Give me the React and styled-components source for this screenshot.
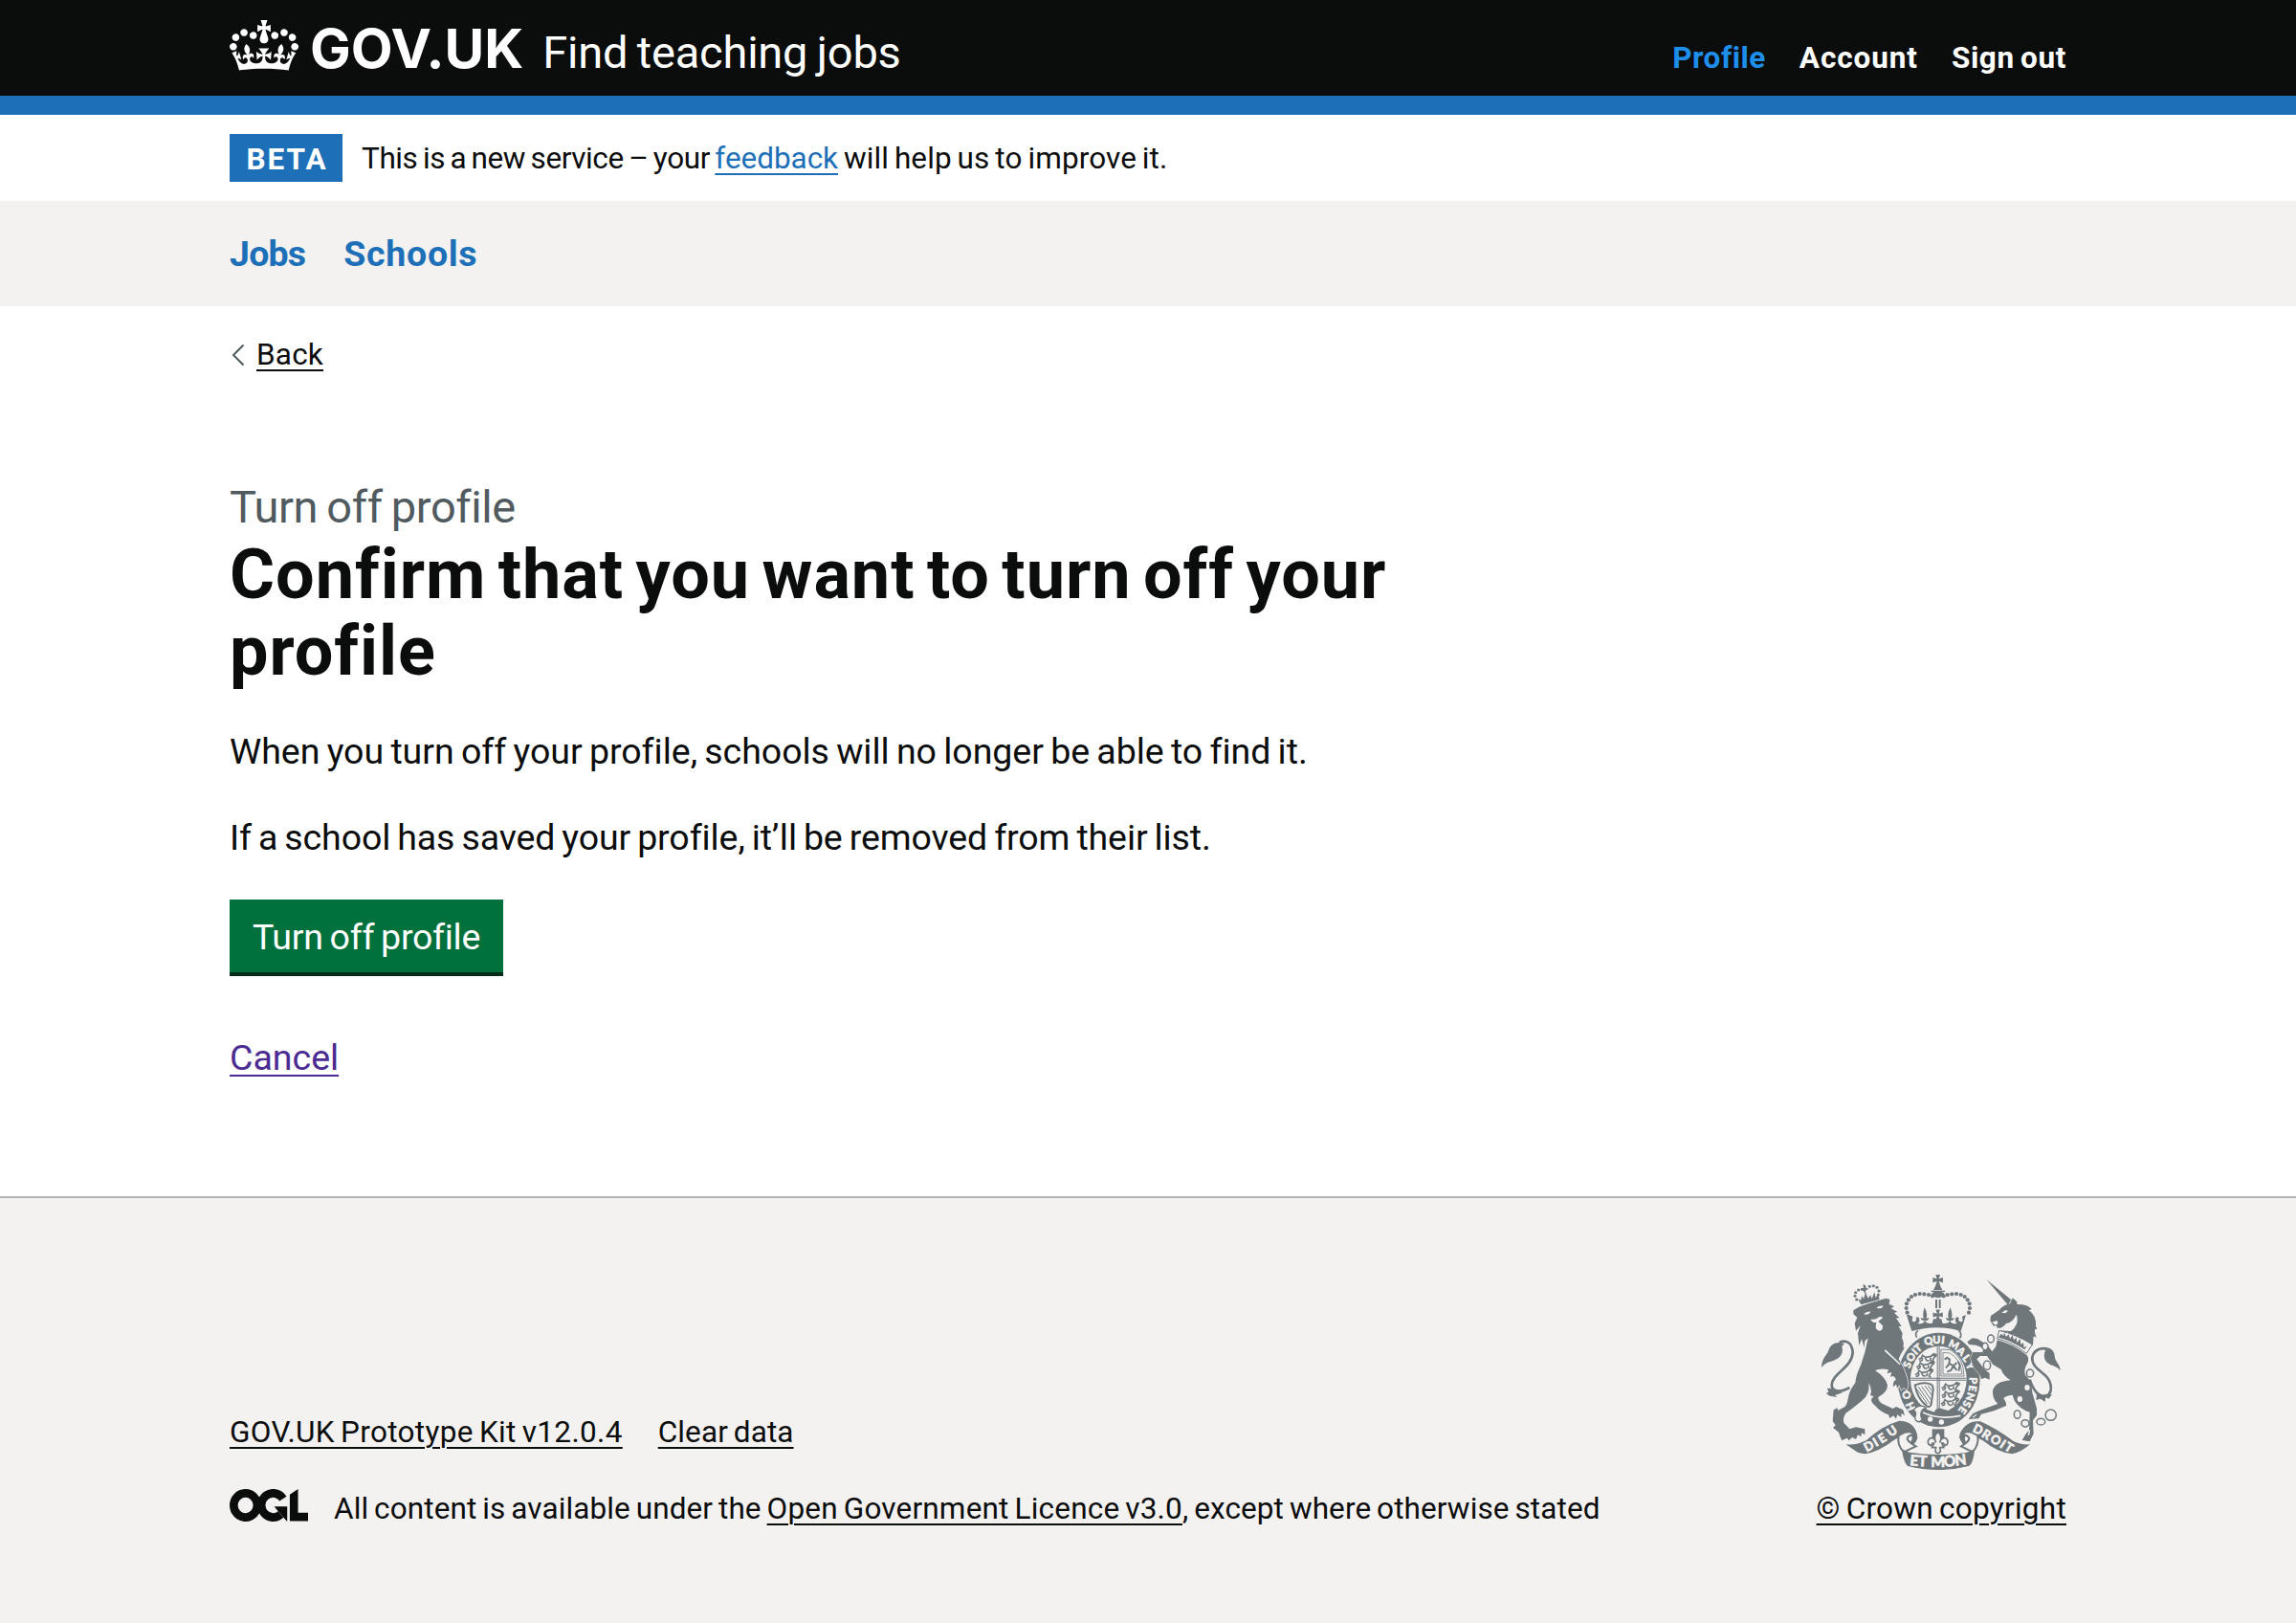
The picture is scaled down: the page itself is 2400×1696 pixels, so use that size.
import React from "react";
import styled, { createGlobalStyle, css } from "styled-components";

const ink = "#0b0c0c";
const blue = "#1d70b8";
const pale = "#f3f2f1";
const crestGrey = "#6f777b";

const GlobalStyle = createGlobalStyle`
  *, *::before, *::after { box-sizing: border-box; }
  body {
    margin: 0;
    background: #ffffff;
    color: ${ink};
    font-family: Roboto, "Liberation Sans", sans-serif;
    font-size: 31.5px;
    line-height: 40px;
    word-spacing: -2px;
  }
  h1, p, ul { margin: 0; padding: 0; font-weight: inherit; }
  ul { list-style: none; }
`;

const Container = styled.div`
  width: 1920px;
  margin: 0 auto;
`;

const underline = css`
  text-decoration: underline;
  text-decoration-thickness: 2px;
  text-underline-offset: 4.6px;
`;

const Link = styled.a`
  ${underline}
  color: ${(p) => p.$color || ink};
  letter-spacing: ${(p) => p.$track || 0}px;
  white-space: nowrap;
`;

/* Header */
const Header = styled.header`
  height: 120px;
  background: ${ink};
  border-bottom: 20px solid ${blue};
  color: #ffffff;
`;

const HeaderInner = styled(Container)`
  display: flex;
  justify-content: space-between;
  align-items: flex-start;
  padding-top: 21px;
`;

const Brand = styled.div`
  display: flex;
  align-items: flex-start;
`;

const CrownIcon = styled.svg`
  display: block;
  width: 72px;
  height: 53px;
  margin-right: 12px;
`;

const BrandText = styled.div`
  display: flex;
  align-items: baseline;
  line-height: 60px;
`;

const LogoType = styled.span`
  font-family: Inter, sans-serif;
  font-weight: 700;
  font-size: 57px;
`;

const ServiceName = styled.span`
  margin-left: 20px;
  font-size: 47px;
  letter-spacing: -0.2px;
`;

const AccountNav = styled.nav`
  display: flex;
  gap: 35px;
  margin-top: 20px;
`;

const AccountLink = styled.a`
  color: ${(p) => (p.$active ? "#1d8feb" : "#ffffff")};
  font-weight: 700;
  letter-spacing: ${(p) => p.$track}px;
`;

/* Phase banner */
const PhaseBanner = styled(Container)`
  display: flex;
  padding: 20px 0;
  height: 90px;
  line-height: 52px;
`;

const PhaseTag = styled.strong`
  width: 118px;
  height: 50px;
  margin-right: 20px;
  padding-left: 2px;
  background: ${blue};
  color: #ffffff;
  font-weight: 700;
  letter-spacing: 2px;
  line-height: 53px;
  text-align: center;
`;

const PhaseText = styled.span`
  white-space: pre;
  letter-spacing: ${(p) => p.$track}px;
`;

/* Primary navigation */
const PrimaryNav = styled.nav`
  background: ${pale};
  padding: 30px 0;
`;

const PrimaryList = styled(Container)`
  display: flex;
  gap: 40px;
`;

const PrimaryLink = styled.a`
  color: ${blue};
  font-weight: 700;
  font-size: 37.5px;
  line-height: 50px;
  letter-spacing: ${(p) => p.$track}px;
`;

/* Page body */
const Main = styled(Container)`
  display: flex;
  flex-direction: column;
  align-items: flex-start;
  padding: 30px 0 120px;
`;

const BackRow = styled.div`
  display: flex;
  align-items: center;
  padding-top: 1px;
  margin-bottom: 109px;
`;

const Chevron = styled.svg`
  display: block;
  width: 14px;
  height: 24px;
  margin: 0 12px 0 2px;
`;

const Caption = styled.span`
  color: #505a5f;
  font-size: 47px;
  line-height: 60px;
  letter-spacing: -0.4px;
`;

const Heading = styled.h1`
  width: 1270px;
  padding-top: 1px;
  margin-bottom: 39px;
  font-weight: 700;
  font-size: 72px;
  line-height: 80px;
  letter-spacing: 0.95px;
  word-spacing: -6.4px;
`;

const Paragraph = styled.p`
  margin-bottom: 40px;
  font-size: 37.5px;
  line-height: 50px;
  letter-spacing: ${(p) => p.$track}px;
  word-spacing: ${(p) => p.$space}px;
`;

const SubmitButton = styled.button`
  width: 286px;
  height: 80px;
  margin: 0 0 60px;
  padding: 14px 0 12px;
  border: 0;
  border-bottom: 4px solid #002d18;
  border-radius: 0;
  background: #00703c;
  color: #ffffff;
  font: inherit;
  font-size: 37.5px;
  line-height: 50px;
  letter-spacing: -0.3px;
  word-spacing: -2px;
`;

const CancelRow = styled.div`
  font-size: 37.5px;
  line-height: 50px;
`;

/* Footer */
const Footer = styled.footer`
  height: 446px;
  border-top: 2px solid #b1b4b6;
  background: ${pale};
  padding-top: 80px;
`;

const FooterInner = styled(Container)`
  display: flex;
  justify-content: space-between;
  align-items: flex-end;
`;

const FooterLinks = styled.ul`
  display: flex;
  gap: 37px;
  margin-bottom: 40px;
`;

const Licence = styled.div`
  display: flex;
  align-items: flex-start;
`;

const OglLogo = styled.svg`
  display: block;
  width: 82px;
  height: 34px;
  margin: -1px 27px 0 0;
`;

const LicenceText = styled.span`
  letter-spacing: 0.1px;
`;

const Copyright = styled.div`
  display: flex;
  flex-direction: column;
  align-items: flex-end;
`;

const CrestIcon = styled.svg`
  display: block;
  width: 250px;
  height: 204px;
  margin: 0 6px 21px 0;
`;

function Crown() {
  return (
    <CrownIcon viewBox="0 0 132 97" preserveAspectRatio="none" aria-hidden="true">
      <path
        fill="#ffffff"
        fillRule="evenodd"
        d="M25 30.2c3.5 1.5 7.7-.2 9.1-3.7 1.5-3.6-.2-7.8-3.9-9.2-3.6-1.4-7.6.3-9.1 3.9-1.4 3.5.3 7.5 3.9 9zM9 39.5c3.6 1.5 7.8-.2 9.2-3.7 1.5-3.6-.2-7.8-3.9-9.1-3.6-1.5-7.6.2-9.1 3.8-1.4 3.5.3 7.5 3.8 9zM4.4 57.2c3.5 1.5 7.7-.2 9.1-3.8 1.5-3.6-.2-7.7-3.9-9.1-3.5-1.5-7.6.3-9.1 3.8-1.4 3.5.3 7.6 3.9 9.1zm38.3-21.4c3.5 1.5 7.7-.2 9.1-3.8 1.5-3.6-.2-7.7-3.9-9.1-3.6-1.5-7.6.3-9.1 3.8-1.3 3.6.4 7.7 3.9 9.1zm64.4-5.6c-3.6 1.5-7.8-.2-9.1-3.7-1.5-3.6.2-7.8 3.8-9.2 3.6-1.4 7.7.3 9.2 3.9 1.3 3.5-.4 7.5-3.9 9zm15.9 9.3c-3.6 1.5-7.7-.2-9.1-3.7-1.5-3.6.2-7.8 3.7-9.1 3.6-1.5 7.7.2 9.2 3.8 1.5 3.5-.3 7.5-3.8 9zm4.7 17.7c-3.6 1.5-7.8-.2-9.2-3.8-1.5-3.6.2-7.7 3.9-9.1 3.6-1.5 7.7.3 9.2 3.8 1.3 3.5-.4 7.6-3.9 9.1zM89.3 35.8c-3.6 1.5-7.8-.2-9.2-3.8-1.4-3.6.2-7.7 3.9-9.1 3.6-1.5 7.7.3 9.2 3.8 1.4 3.6-.3 7.7-3.9 9.1zM69.7 17.7l8.9 4.7V9.3l-8.9 2.8c-.2-.3-.5-.6-.9-.9L72.4 0H59.6l3.5 11.2c-.3.3-.6.5-.9.9l-8.8-2.8v13.1l8.8-4.7c.3.3.6.7.9.9l-5 15.4v.1c-.2.8-.4 1.6-.4 2.4 0 4.1 3.1 7.5 7 8.1h.2c.3 0 .7.1 1 .1.4 0 .7 0 1-.1h.2c4-.6 7.1-4.1 7.1-8.1 0-.8-.1-1.7-.4-2.4V34l-5.1-15.4c.4-.2.7-.6 1-.9zM66 92.8c16.9 0 32.8 1.1 47.1 3.2 4-16.9 8.9-26.7 14-33.5l-9.6-3.4c1 4.9 1.1 7.2 0 10.2-1.5-1.4-3-4.3-4.2-8.7L108.6 76c2.8-2 5-3.2 7.5-3.3-4.4 9.4-10 11.9-13.6 11.2-4.3-.8-6.3-4.6-5.6-7.9 1-4.7 5.7-5.9 8-.5 4.3-8.7-3-11.4-7.6-8.8 7.1-7.2 7.9-13.5 2.1-21.1-8 6.1-8.1 12.3-4.5 20.8-4.7-5.4-12.1-2.5-9.5 6.2 3.4-5.2 7.9-2 7.2 3.1-.6 4.3-6.4 7.8-13.5 7.2-10.3-.9-10.9-8-11.2-13.8 2.5-.5 7.1 1.8 11 7.3L80.2 60c-4.1 4.4-8 5.3-12.3 5.4 1.4-4.4 8-11.6 8-11.6H55.5s6.4 7.2 7.9 11.6c-4.2-.1-8-1-12.3-5.4l1.4 16.4c3.9-5.5 8.5-7.7 10.9-7.3-.3 5.8-.9 12.8-11.1 13.8-7.2.6-12.9-2.9-13.5-7.2-.7-5 3.8-8.3 7.1-3.1 2.7-8.7-4.6-11.6-9.4-6.2 3.7-8.5 3.6-14.7-4.6-20.8-5.8 7.6-5 13.9 2.2 21.1-4.7-2.6-11.9.1-7.7 8.8 2.3-5.5 7.1-4.2 8.1.5.7 3.3-1.3 7.1-5.7 7.9-3.5.7-9-1.8-13.5-11.2 2.5.1 4.7 1.3 7.5 3.3l-4.7-15.4c-1.2 4.4-2.7 7.2-4.3 8.7-1.1-3-.9-5.3 0-10.2l-9.5 3.4c5 6.9 9.9 16.7 14 33.5 14.8-2.1 30.8-3.2 47.7-3.2z"
      />
    </CrownIcon>
  );
}

function OpenLicenceLogo() {
  return (
    <OglLogo viewBox="0 0 483.2 195.7" preserveAspectRatio="none" aria-hidden="true">
      <g fill="none" stroke={ink} strokeWidth="50.7">
        <circle cx="97.8" cy="97.8" r="72.4" />
        <path d="M329.2 58.9A72.4 72.4 0 1 0 315.6 152.4" />
      </g>
      <g fill={ink}>
        <path d="M274.9 105.7h80v87.8h-3l-52.7-60.3z" />
        <path d="M421.5 142.8V.1l-50.7 32.3v161.1h112.4v-50.7z" />
      </g>
    </OglLogo>
  );
}

const arcBeads = [
  [311, 155], [308, 141], [309, 127], [315, 115], [324, 105],
  [336, 99], [350, 96], [364, 97], [378, 99], [390, 103],
];

const smallCrownBeads = [
  [122, 84], [117, 73], [119, 62], [128, 54], [139, 52],
  [163, 43], [175, 41], [186, 46], [192, 57], [190, 69],
];

const chainRings = [
  [78, 222, 10, 12], [60, 246, 9, 11], [66, 305, 11, 14], [201, 330, 11, 12],
  [161, 459, 10, 13], [186, 487, 12, 11], [235, 482, 13, 10], [266, 461, 17, 17],
];

/* letter, centre x, centre y, rotation */
const garterLetters = [
  ["H", 321, 449, -112], ["O", 309, 413, -102],
  ["S", 311, 318, -66], ["O", 322, 294, -56], ["I", 334, 277, -46], ["T", 345, 266, -38],
  ["Q", 377, 243, -10], ["U", 403, 240, -1], ["I", 423, 241, 6],
  ["M", 457, 255, 25], ["A", 480, 276, 42], ["L", 497, 298, 54], ["Y", 509, 322, 66],
  ["P", 518, 368, 91], ["E", 516, 393, 98], ["N", 509, 419, 106], ["S", 498, 442, 116], ["E", 485, 461, 126],
];

const ribbonLetters = [
  ["D", 190, 573, -28], ["I", 211, 561, -30], ["E", 232, 548, -33], ["U", 263, 526, -36],
  ["D", 533, 521, 25], ["R", 560, 537, 32], ["O", 589, 554, 34], ["I", 611, 567, 34], ["T", 630, 577, 32],
];

const centreRibbonLetters = [
  ["E", 333, 618, 5], ["T", 359, 620, 3], ["M", 407, 622, 0], ["O", 444, 620, -4], ["N", 478, 616, -7],
];

function Lettering({ letters, size }) {
  return (
    <g
      fill={pale}
      stroke={pale}
      strokeWidth="1.6"
      fontFamily="Lato, sans-serif"
      fontWeight="900"
      fontSize={size}
      textAnchor="middle"
    >
      {letters.map(([char, x, y, angle]) => (
        <text key={`${x}-${y}`} y={size * 0.36} transform={`translate(${x} ${y}) rotate(${angle})`}>
          {char}
        </text>
      ))}
    </g>
  );
}

function PassantLion({ x, y }) {
  return (
    <g transform={`translate(${x} ${y})`} fill="none" stroke={crestGrey} strokeWidth="5">
      <path d="M2 18l8-5 4-8 9 6 14-2 9-5 8 4-5 6-4 8 6 4M14 13l-2 8-8 2M22 13l5 8 8 1M40 12l-2 10M44 4l5-4 8 3-2 6" />
    </g>
  );
}

function CrossPattee({ x, y, s }) {
  return (
    <path
      transform={`translate(${x} ${y}) scale(${s})`}
      d="M-7-17H7L3-4l13-4V8L3 4l4 13H-7l4-13-13 4V-8l13 4z"
    />
  );
}

function RoyalCrest() {
  return (
    <CrestIcon viewBox="42 36 750 612" fill={crestGrey} aria-hidden="true">
      {/* imperial crown */}
      <CrossPattee x={407} y={53} s={1} />
      <path d="M401 68h12l8 16h-28zM388 94q19-12 39 0-2 13-19 15-18-2-20-15zM399 114h6v27h-6zM410 114h6v27h-6z" />
      <path d="M386 86h43v4h-43z" />
      {arcBeads.map(([x, y]) => (
        <g key={`${x}-${y}`}>
          <circle cx={x} cy={y} r="6.3" />
          <circle cx={815 - x} cy={y} r="6.3" />
        </g>
      ))}
      <CrossPattee x={407} y={162} s={0.95} />
      <path d="M316 162l12 5-2 14q8 8 14-4-6-8 6-8 8 12-2 20 16 4 22-8-12 0-13-10l10 2q-6-10 2-34 12 20 5 34l9-2q-1 10-12 10 4 10 22 8l4-14h25l4 14q18 2 22-8-11 0-12-10l9 2q-6-14 5-34 9 22 3 34l9-2q-1 10-13 10 6 12 22 8-10-8-2-20 12 0 6 8 6 12 14 4l-2-14 12-5q-6 22-16 51-77-23-154 0-10-30-16-51z" />
      <path fill="none" stroke={crestGrey} strokeWidth="5" d="M345 211q-12 8-4 22M472 211q12 8 4 24" />

      {/* garter and shield */}
      <ellipse cx="410" cy="366" rx="129" ry="148" />
      <ellipse cx="409" cy="364" rx="88" ry="104" fill={pale} />
      <Lettering letters={garterLetters} size={33} />
      <path d="M404 262h3v202h-3zM410 262h3v202h-3zM322 359h174v3H322zM322 365h174v3H322z" />
      <PassantLion x={345} y={284} />
      <PassantLion x={338} y={308} />
      <PassantLion x={334} y={332} />
      <PassantLion x={417} y={374} />
      <PassantLion x={417} y={398} />
      <PassantLion x={415} y={423} />
      <path fill="none" stroke={crestGrey} strokeWidth="2.5" d="M417 270v84h72q0-56-42-82zM423 280v68h60q-4-46-38-66z" />
      <path fill="none" stroke={crestGrey} strokeWidth="6" d="M428 302l8-6 8 6-2 12 14 8 10-10M444 314l-12 14M456 322l-8 14-12 4M456 322l10 14M472 338l4-18-6-12" />
      <path fill="none" stroke={crestGrey} strokeWidth="6" d="M335 382q30-12 50-2 8 4 7 18l-6 44q-4 12-14 6-30-24-37-66z" />
      <path fill="none" stroke={crestGrey} strokeWidth="3" d="M346 388l36 52M356 386l29 42M366 384l22 30M376 384l12 16M342 396l32 46" />
      <path d="M399 460l12-6 28 8-8 12-36-2z" />
      {/* buckle and hanging strap */}
      <path d="M352 474Q400 492 452 480L478 492Q420 522 358 498z" />
      <path fill="none" stroke={pale} strokeWidth="5" d="M360 468Q410 492 478 478" />
      <path fill={pale} stroke={crestGrey} strokeWidth="4" d="M338 452q22-10 32 2l-10 4q-12 14-2 32l-10 8q-16-4-12-18 6-14-6-18z" />
      <circle cx="383" cy="489" r="8" fill={pale} />
      <circle cx="418" cy="498" r="8" fill={pale} />
      <path d="M389 520h38v28h-38z" />
      <path fill={pale} stroke={crestGrey} strokeWidth="5" d="M407 528q-16 16-6 34-4-16-17-14-12 6-6 20l8 4q2-10 9-8l-6 14h12l-2 12q8 12 16 0l-2-12h12l-6-14q7-2 9 8l8-4q6-14-6-20-13-2-17 14 10-18-6-34z" />

      {/* motto ribbons */}
      <path d="M118 568Q150 572 182 556Q230 510 286 494Q330 494 342 536Q348 560 318 578L306 574Q328 562 326 544Q322 532 304 536Q284 546 270 554Q220 592 178 598Q158 596 148 588z" />
      <path d="M696 568Q668 570 644 558Q590 518 540 496Q496 492 476 534Q470 556 496 578L508 574Q488 560 492 546Q496 532 512 538Q530 548 548 556Q594 594 640 598Q666 594 696 568z" />
      <path fill={pale} stroke={crestGrey} strokeWidth="6" d="M284 540Q278 570 300 592L338 574Q306 556 312 546Q322 534 336 542Q326 524 304 530z" />
      <path fill={pale} stroke={crestGrey} strokeWidth="6" d="M532 540Q536 570 516 592L480 574Q510 556 504 546Q494 534 480 542Q490 524 512 530z" />
      <path d="M294 582Q304 588 318 593Q407 607 498 593Q512 589 522 582Q520 624 504 636Q407 660 312 636Q298 622 294 582z" />
      <Lettering letters={ribbonLetters} size={39} />
      <Lettering letters={centreRibbonLetters} size={47} />

      {/* lion supporter */}
      <g transform="translate(30 30)">
        <path stroke={pale} strokeWidth="4" paintOrder="stroke" d="M112 118L128 108Q165 92 215 80L226 84 224 98 240 106 230 112 250 122 240 126 257 142 246 142 263 168 254 168 266 190 264 205Q272 218 268 232L272 236Q260 254 254 270L262 285Q280 318 284 350L280 368 270 360 262 368 256 352 250 362 246 350 236 358 238 342 246 334 238 324 228 326 232 312 218 316 222 304Q200 298 180 306 214 328 219 352 220 374 190 390 188 400 202 410L236 426 246 420 268 430 273 448 262 440 262 454 250 445 246 458 238 448 226 456 222 445Q195 435 180 416 168 408 168 396L176 388 165 384 168 372Q166 355 160 345 165 380 140 400 105 430 88 440 78 455 82 470L100 490 120 484 148 490 148 508 138 502 136 514 126 508 120 522 108 516 98 526 92 518 76 526Q70 515 66 500L48 486 56 478 47 465 50 430 62 424 64 432 78 424Q92 420 95 395 98 370 118 345 120 320 135 290 150 250 158 205L148 214 146 234 138 208 130 228 126 190 134 165 120 182 116 158 124 140 112 130z" />
        <g fill={pale}>
          <path d="M144 130q10-10 22-8-6 12-22 8zM184 110q10-8 22-6-6 12-22 6zM166 146q18 2 24-6 12-6 14 2l-14 10 14 14q2 14-10 16-12-2-12-14l2-12q-12 2-18-10z" />
          <path d="M212 240l48 46-4 2q-20-20-46-42z" />
        </g>
        <path
          stroke={pale}
          strokeWidth="4"
          paintOrder="stroke"
          d="M126 82l10 4 2-14 6 10 6-20 8 18 8-10 4 12 8-22 4 18 6-10 4 6 2 10-58 16z"
        />
        {smallCrownBeads.map(([x, y]) => (
          <circle key={`${x}-${y}`} cx={x} cy={y} r="4.6" />
        ))}
        <path d="M142 36l8 4 2 8 8 2-10 6 2 14-8-12-8-4 8-6z" />
        <path fill="none" stroke={crestGrey} strokeWidth="8" d="M100 360C72 376 44 374 44 352C46 314 108 298 110 250C108 218 90 210 68 218" />
        <path d="M84 222C58 214 40 224 34 244C30 258 12 268 12 298C22 280 40 280 56 272C78 262 80 246 76 230zM46 362l-16 0 4 12-8 4 12 8 24 4-8-6 24-8z" />
      </g>

      {/* unicorn supporter */}
      <g transform="translate(495 15)">
        <path d="M64 36L142 100 132 116z" />
        <path d="M138 112L146 94 160 106 160 114Q196 114 206 130L197 132Q222 150 219 182L223 192 216 192Q214 206 221 218L212 214 210 242 198 234 182 240 172 220 160 226 150 208 138 214 130 200 118 204 108 196 102 186 98 190 96 180 86 182 76 164 78 150 104 132Q118 116 138 112z" />
        <path fill={pale} d="M82 170l16-6 2 12-10 2zM112 140l12-8 8 2-8 8zM104 190Q120 184 126 174 146 172 158 146 164 160 158 178 148 196 140 198L104 196z" />
        <path fill={pale} stroke={crestGrey} strokeWidth="3" d="M104 196Q156 208 208 240L190 268Q140 230 98 222z" />
        <path d="M110 206l8 6 2-10 6 14 8-8 4 14 8-12 4 16 8-8 2 16 10-12 2 18 8-6 2 16 10-6-8 12Q140 226 102 218z" />
        <path stroke={pale} strokeWidth="3" paintOrder="stroke" d="M98 226Q142 236 190 272 200 284 192 300 180 320 186 336 206 350 208 390L222 440 222 462 210 478 212 520 200 544 176 540 188 520 198 510 200 452Q170 444 152 416L146 398Q124 400 118 408 128 424 126 432L88 448 48 458 40 472 8 474 22 456 44 446 100 426Q82 410 84 384 92 356 140 352 118 340 110 318L84 302 66 276 44 276 34 286 58 318 74 330 74 350 60 344 48 348 44 336 24 312 14 282 22 264 52 264 56 252 32 242 10 240 4 232 20 220 36 222 68 242 82 262 94 246z" />
        {chainRings.map(([x, y, rx, ry]) => (
          <ellipse key={`${x}-${y}`} cx={x} cy={y} rx={rx} ry={ry} fill={pale} stroke={crestGrey} strokeWidth="4.5" />
        ))}
        <g fill={pale}>
          <ellipse cx="192" cy="375" rx="8" ry="9" />
          <ellipse cx="169" cy="411" rx="8" ry="9" />
          <path d="M198 508l-4 16 4 1 4-16zM20 468l12-10 2 2-10 10z" />
        </g>
        <path fill="none" stroke={crestGrey} strokeWidth="8" d="M200 350C210 380 224 400 244 402C276 400 270 358 250 338C222 314 206 304 208 280C212 260 232 248 252 254" />
        <path d="M244 248C266 248 278 260 278 276C280 296 296 302 296 322C284 306 268 308 256 298C242 286 244 266 250 258zM206 372l22 26 42-2-10 14-10-4-2 14-14-10-14 4 2-16z" />
      </g>
    </CrestIcon>
  );
}

export default function App() {
  return (
    <>
      <GlobalStyle />
      <Header>
        <HeaderInner>
          <Brand>
            <Crown />
            <BrandText>
              <LogoType>GOV.UK</LogoType>
              <ServiceName>Find teaching jobs</ServiceName>
            </BrandText>
          </Brand>
          <AccountNav>
            <AccountLink $active $track={0.5}>Profile</AccountLink>
            <AccountLink $track={0.9}>Account</AccountLink>
            <AccountLink $track={0.6}>Sign out</AccountLink>
          </AccountNav>
        </HeaderInner>
      </Header>

      <PhaseBanner>
        <PhaseTag>BETA</PhaseTag>
        <PhaseText $track={-0.4}>{"This is a new service – your "}</PhaseText>
        <Link $color={blue} $track={-0.05}>feedback</Link>
        <PhaseText $track={0.1}>{" will help us to improve it."}</PhaseText>
      </PhaseBanner>

      <PrimaryNav>
        <PrimaryList>
          <PrimaryLink $track={-0.8}>Jobs</PrimaryLink>
          <PrimaryLink $track={0.7}>Schools</PrimaryLink>
        </PrimaryList>
      </PrimaryNav>

      <Main as="main">
        <BackRow>
          <Chevron viewBox="0 0 14 24" aria-hidden="true">
            <path d="M12.5 1.5L2 12l10.5 10.5" fill="none" stroke="#505a5f" strokeWidth="2" />
          </Chevron>
          <Link $track={0.2}>Back</Link>
        </BackRow>
        <Caption>Turn off profile</Caption>
        <Heading>Confirm that you want to turn off your profile</Heading>
        <Paragraph $track={-0.03} $space={-2}>
          When you turn off your profile, schools will no longer be able to find it.
        </Paragraph>
        <Paragraph $track={-0.1} $space={-2.2}>
          If a school has saved your profile, it’ll be removed from their list.
        </Paragraph>
        <SubmitButton type="button">Turn off profile</SubmitButton>
        <CancelRow>
          <Link $color="#4c2c92">Cancel</Link>
        </CancelRow>
      </Main>

      <Footer>
        <FooterInner>
          <div>
            <FooterLinks>
              <li><Link $track={0.33}>GOV.UK Prototype Kit v12.0.4</Link></li>
              <li><Link $track={0.1}>Clear data</Link></li>
            </FooterLinks>
            <Licence>
              <OpenLicenceLogo />
              <LicenceText>
                All content is available under the{" "}
                <Link $track={0.18}>Open Government Licence v3.0</Link>, except where otherwise stated
              </LicenceText>
            </Licence>
          </div>
          <Copyright>
            <RoyalCrest />
            <Link $track={0.27}>© Crown copyright</Link>
          </Copyright>
        </FooterInner>
      </Footer>
    </>
  );
}
